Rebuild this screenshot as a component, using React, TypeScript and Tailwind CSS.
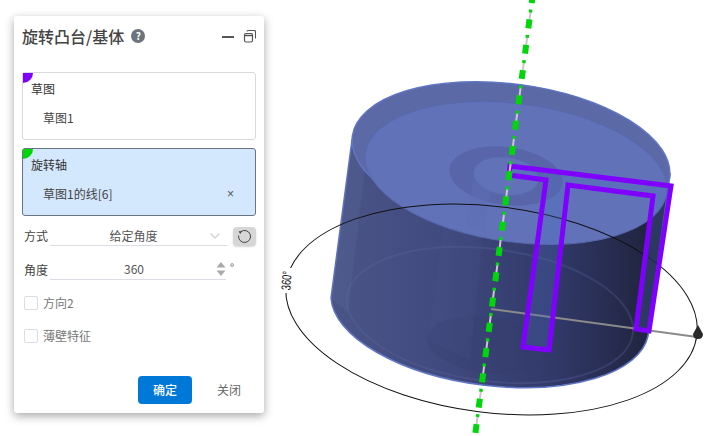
import React from "react";

const Scene = () => (
  <svg className="absolute left-0 top-0" width="720" height="436" viewBox="0 0 720 436">
    <defs>
      <linearGradient id="body" x1="330" y1="0" x2="650" y2="0" gradientUnits="userSpaceOnUse">
        <stop offset="0" stopColor="#4b5588" />
        <stop offset="0.35" stopColor="#414a7e" />
        <stop offset="0.7" stopColor="#31396a" />
        <stop offset="1" stopColor="#20243e" />
      </linearGradient>
    </defs>
    {/* body */}
    <path
      d="M352 140 L331 298 A160 73 7.5 0 0 648 336 L670 174 Z"
      fill="url(#body)"
      stroke="#6076c4"
      strokeWidth="1.5"
    />
    {/* see-through details */}
    <ellipse cx="490" cy="315" rx="144" ry="66" transform="rotate(7.5 490 315)" fill="none" stroke="#5d689e" strokeWidth="2" opacity="0.3" />
    <ellipse cx="487" cy="345" rx="60" ry="28" transform="rotate(7.5 487 345)" fill="#343c6b" opacity="0.25" />
    <path d="M352 140 L331 298 L348 312 L366 160 Z" fill="#5f6a9c" opacity="0.25" />
    <path d="M450 180 L428 340 L470 360 L488 190 Z" fill="#5a659c" opacity="0.1" />
    {/* top face */}
    <ellipse cx="511" cy="157" rx="160" ry="73" transform="rotate(7.5 511 157)" fill="#5c69a7" stroke="#6076c4" strokeWidth="1.5" />
    <ellipse cx="516" cy="173" rx="152" ry="69" transform="rotate(7.5 516 173)" fill="#6272b9" stroke="#5869ad" strokeWidth="1" />
    <ellipse cx="506" cy="176" rx="57" ry="29" transform="rotate(7.5 506 176)" fill="#5866a9" />
    <ellipse cx="506" cy="176" rx="33" ry="19" transform="rotate(7.5 506 176)" fill="#6272b9" stroke="#5869ad" strokeWidth="1" />
    <path d="M473 180 L466 226 L484 232 L490 190 Z" fill="#5f6fb6" opacity="0.45" />
    {/* big ellipse */}
    <ellipse cx="491.5" cy="309.5" rx="207" ry="103" transform="rotate(7.2 491.5 309.5)" fill="none" stroke="#111" strokeWidth="1" />
    <rect x="277" y="268" width="18" height="25" fill="#fff" />
    {/* radius line */}
    <line x1="491" y1="309" x2="697" y2="337" stroke="#8a8a8a" strokeWidth="2" />
    <path d="M698 325 L703 334 Q703 339 698 339 Q693 339 693 334 Z" fill="#2a2a2a" />
    {/* sketch */}
    <path
      d="M510 166 L671 186 L649 331 L636 329 L653 196 L568 185 L549 350 L523 347 L546 180 L509 175 Z"
      fill="#4a6cc0"
      fillOpacity="0.28"
      stroke="#8000ff"
      strokeWidth="5"
      strokeLinejoin="miter"
    />
    {/* axis */}
    <line x1="532.8" y1="-5.8" x2="475" y2="436" stroke="#c8c8c8" strokeWidth="2" strokeDasharray="9.5 16" strokeDashoffset="-16.5" />
    <line x1="532.8" y1="-5.8" x2="475" y2="436" stroke="#00d60a" strokeWidth="6" strokeDasharray="9 16.5" />
    <line x1="532.8" y1="-5.8" x2="475" y2="436" stroke="#00d60a" strokeWidth="3.5" strokeDasharray="3 22.5" strokeDashoffset="-15.5" />
    <text
      x="0"
      y="0"
      transform="translate(291 281) rotate(-85)"
      textAnchor="middle"
      fontSize="13"
      textLength="19"
      lengthAdjust="spacingAndGlyphs"
      fontFamily="Liberation Sans, sans-serif"
      fill="#111"
    >
      360°
    </text>
  </svg>
);

const Field = ({ title, value, active, close }: { title: string; value: string; active?: boolean; close?: boolean }) => (
  <div className={`h-[68px] rounded-[3px] border overflow-hidden px-2 pt-[6px] ${active ? "bg-[#d3e7fd] border-[#6c7383]" : "bg-white border-[#d9d9dd]"}`}>
    <div className="text-[12px] leading-[20px] text-[#333]">{title}</div>
    <div className="mt-[9px] pl-3 pr-[13px] flex items-center justify-between text-[12px] leading-[20px] text-[#444]">
      <span>{value}</span>
      {close && <span className="text-[12px] text-[#555] font-['Liberation_Sans',sans-serif]">×</span>}
    </div>
  </div>
);

const Check = ({ label }: { label: string }) => (
  <div className="flex items-center gap-[5px] h-5 pl-[2px]">
    <span className="w-[14px] h-[14px] rounded-[2px] border border-[#dcdce4] bg-white" />
    <span className="text-[12px] text-[#777]">{label}</span>
  </div>
);

export default function App() {
  return (
    <div className="relative w-[720px] h-[436px] bg-white overflow-hidden font-['Noto_Sans_CJK_SC','Noto_Sans',sans-serif]">
      <Scene />
      <div className="absolute left-[14px] top-[16px] w-[250px] h-[397px] bg-white rounded-[3px] shadow-[0_3px_10px_rgba(0,0,0,0.35)] px-2 flex flex-col">
        <div className="flex items-center h-10">
          <span className="text-[16px] font-medium text-[#444] leading-[40px]">旋转凸台/基体</span>
          <span className="ml-[7px] w-[14px] h-[14px] rounded-full bg-[#6c757d] text-white text-[10px] font-bold leading-[14px] text-center">?</span>
          <svg className="ml-auto" width="36" height="14" viewBox="0 0 36 14" fill="none">
            <line x1="2" y1="8" x2="14" y2="8" stroke="#555" strokeWidth="2" />
            <rect x="24.5" y="4.5" width="8" height="8.5" rx="1.5" stroke="#555" strokeWidth="1.2" />
            <line x1="24.5" y1="6.5" x2="32.5" y2="6.5" stroke="#555" strokeWidth="1.5" />
            <path d="M27 2.5 Q27 1.5 28 1.5 L34.5 1.5 Q35.5 1.5 35.5 2.5 L35.5 9.5" stroke="#555" strokeWidth="1.1" />
          </svg>
        </div>
        <div className="mt-4 flex flex-col gap-2">
          <div className="relative">
            <Field title="草图" value="草图1" />
            <span className="absolute left-[1px] top-[1px] w-[10px] h-[10px] bg-[#8000ff] rounded-br-[10px]" />
          </div>
          <div className="relative">
            <Field title="旋转轴" value="草图1的线[6]" active close />
            <span className="absolute left-[1px] top-[1px] w-[10px] h-[10px] bg-[#00d60a] rounded-br-[10px]" />
          </div>
        </div>
        <div className="mt-[10px] flex items-center pl-[2px]">
          <span className="w-[26px] text-[12px] text-[#444]">方式</span>
          <div className="w-[177px] h-[20px] border-b border-[#dcdce4] flex items-center relative">
            <span className="flex-1 text-center text-[12px] text-[#555] pr-[10px]">给定角度</span>
            <svg className="absolute right-[6px] top-[6px]" width="12" height="8" viewBox="0 0 12 8" fill="none"><path d="M1.5 1.5 L6 6 L10.5 1.5" stroke="#ccccd2" strokeWidth="1.1" /></svg>
          </div>
          <button className="ml-[6px] w-[23px] h-[19px] rounded-[4px] bg-[#d6d6d6] shadow-[0_1px_2px_rgba(0,0,0,0.15)] flex items-center justify-center">
            <svg width="15" height="15" viewBox="0 0 15 15" fill="none">
              <path d="M4 2.6 A6 6 0 1 1 1.6 6.5" stroke="#444" strokeWidth="1" />
              <path d="M1.6 2.2 L5 2.2 L3.2 5 Z" fill="#444" />
            </svg>
          </button>
        </div>
        <div className="mt-[13px] flex items-center pl-[2px]">
          <span className="w-[26px] text-[12px] text-[#444]">角度</span>
          <div className="w-[176px] h-[21px] border-b border-[#dcdce4] flex items-center relative">
            <span className="flex-1 text-center text-[12px] text-[#555] pr-[8px]">360</span>
            <svg className="absolute right-[-1px] top-[2px]" width="12" height="16" viewBox="0 0 12 16" fill="#aaa"><path d="M6 1 L10.5 6.5 L1.5 6.5 Z" /><path d="M6 15 L10.5 9.5 L1.5 9.5 Z" /></svg>
          </div>
          <span className="ml-[4px] -mt-[5px] text-[11px] text-[#444]">°</span>
        </div>
        <div className="mt-[13px]"><Check label="方向2" /></div>
        <div className="mt-[13px]"><Check label="薄壁特征" /></div>
        <div className="mt-[30px] flex items-center justify-end pr-[15px]">
          <button className="w-[54px] h-[28px] bg-[#0078d7] rounded-[4px] text-white text-[12px] font-medium">确定</button>
          <span className="ml-[25px] text-[12px] text-[#666]">关闭</span>
        </div>
      </div>
    </div>
  );
}
